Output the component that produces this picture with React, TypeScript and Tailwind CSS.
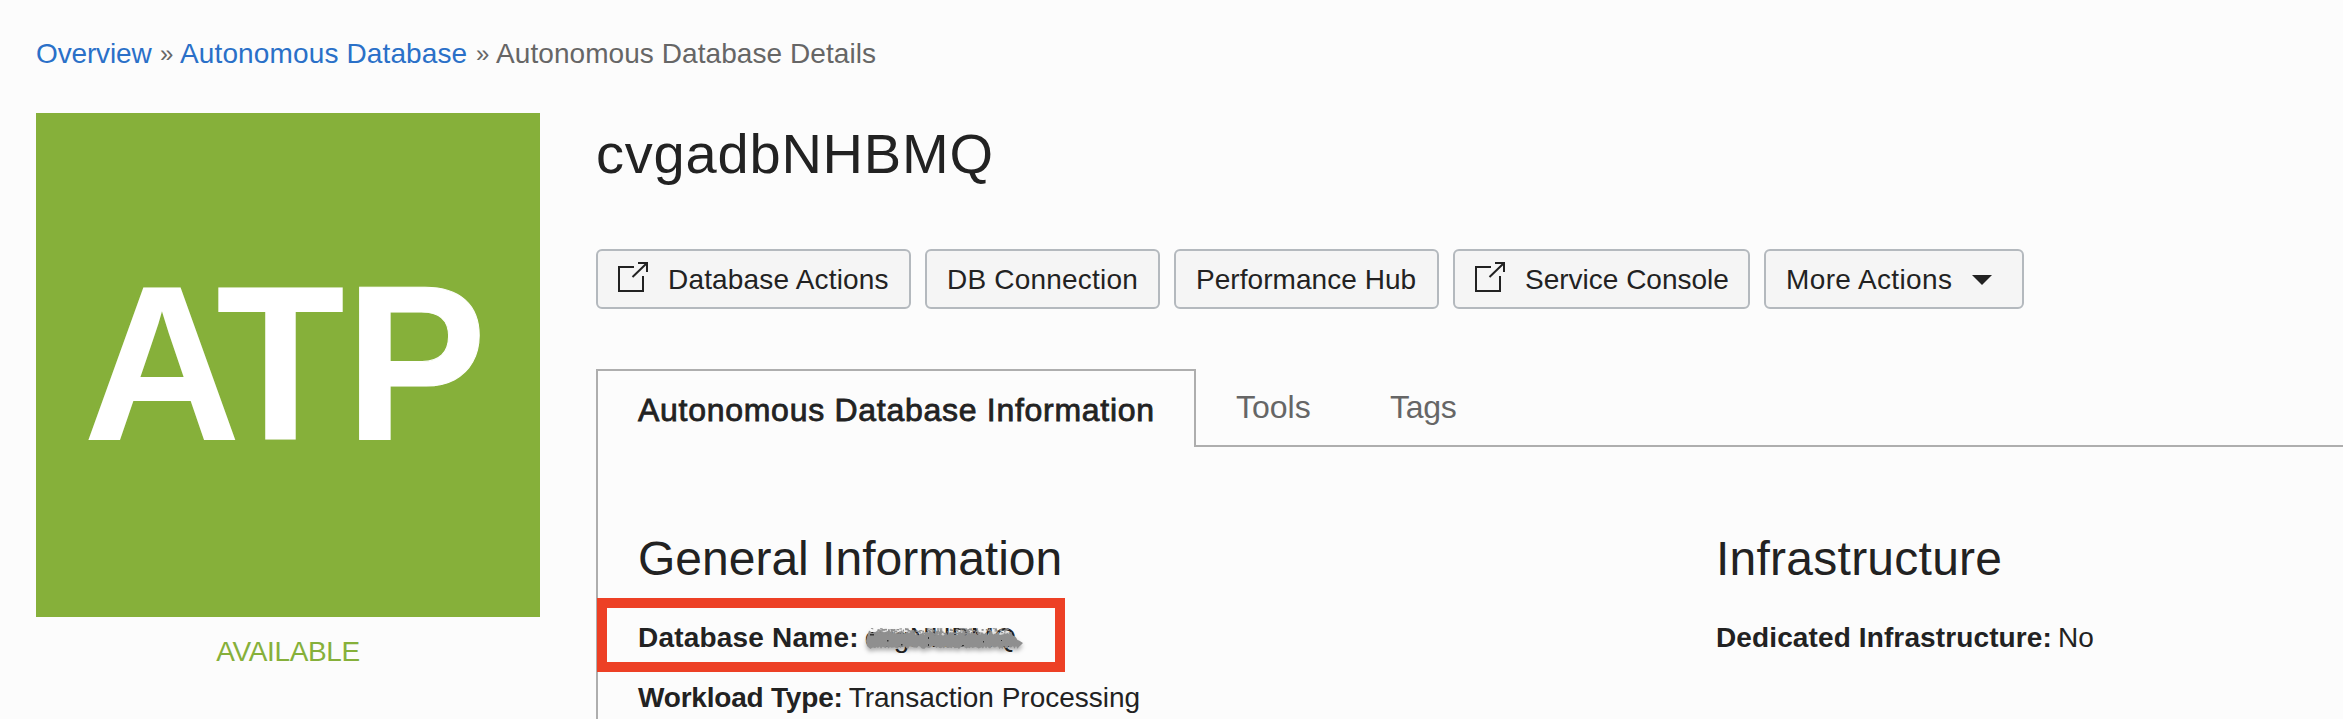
import type { ReactNode } from "react";

function ExternalIcon() {
  return (
    <svg width="30" height="30" viewBox="0 0 30 30" fill="none" stroke="#222" strokeWidth="2" className="-mt-[6px] mr-[20px] shrink-0">
      <path d="M16 5H1V29H25V14" />
      <path d="M14.5 15L28.5 1.5M20 1H29V10" />
    </svg>
  );
}

function ActionButton({ width, children }: { width: string; children: ReactNode }) {
  return (
    <button
      className={`flex h-[60px] shrink-0 items-center whitespace-nowrap rounded-[6px] border-2 border-[#b4b9be] bg-[#f5f5f5] pl-5 pt-[2px] text-[28px] leading-10 ${width}`}
    >
      {children}
    </button>
  );
}

function Field({ label, tracking, children }: { label: string; tracking: string; children: ReactNode }) {
  return (
    <div className="flex h-10 whitespace-nowrap text-[28px] leading-10">
      <span className={`font-bold ${tracking}`}>{label}</span>
      <span className="ml-[6px]">{children}</span>
    </div>
  );
}

let seed = 11;
function rand() {
  seed = (seed * 16807) % 2147483647;
  return seed / 2147483647;
}

const upper: string[] = [];
const lower: string[] = [];
for (let x = 4; x <= 154; x += 1.5) {
  const slope = x > 146 ? (x - 146) * 0.8 : x < 50 ? -1.5 : 0;
  upper.push(`${x},${(5 + slope + rand() * 3.5).toFixed(1)}`);
  lower.unshift(`${x},${(22 - rand() * 3).toFixed(1)}`);
}
const strokeShape = ["1,14", "2,10", ...upper, "158,16", "156,18", ...lower, "2,19"].join(" ");
const specks = Array.from({ length: 170 }, () => {
  const x = 5 + rand() * 140;
  const y = 1 + rand() * 6;
  return { x, y, w: 1 + rand() * 2.2, h: 0.8 + rand() * 1.4 };
});

function Scribble() {
  return (
    <svg width="160" height="28" viewBox="0 0 160 28" className="absolute left-0 top-[9px] drop-shadow-[0_3px_2px_rgba(0,0,0,0.3)]">
      <polygon points={strokeShape} fill="#8f8f8f" />
      {specks.map((s, i) => (
        <rect key={i} x={s.x} y={s.y} width={s.w} height={s.h} fill="#8f8f8f" />
      ))}
      <g fill="#333">
        <rect x="5" y="7" width="4" height="1.5" />
        <rect x="22" y="13" width="1.5" height="1.5" />
        <rect x="36" y="17" width="1.5" height="1.5" />
        <rect x="63" y="10" width="1" height="2" />
        <rect x="63" y="17" width="1" height="2" />
        <rect x="97" y="18" width="2" height="1" />
        <rect x="118" y="14" width="1" height="1.5" />
        <rect x="136" y="13" width="1" height="1" />
      </g>
    </svg>
  );
}

export default function App() {
  return (
    <div className="h-[719px] w-[2343px] overflow-hidden bg-[#fcfcfc] font-['Liberation_Sans',Arial,sans-serif] text-[#222]">
      <nav className="flex h-[113px] whitespace-nowrap pl-9 pt-[34px] text-[28px] leading-10 text-[#666]">
        <a className="w-[124px] tracking-[-0.15px] text-[#2a70c8]">Overview</a>
        <span className="w-5 text-[24px]">»</span>
        <a className="w-[296px] tracking-[0.13px] text-[#2a70c8]">Autonomous Database</a>
        <span className="w-5 text-[24px]">»</span>
        <span className="tracking-[0.07px]">Autonomous Database Details</span>
      </nav>

      <main className="flex pl-9">
        <aside className="w-[504px] shrink-0 text-center">
          <div className="h-[504px] bg-[#86b03a]">
            <svg width="504" height="504" viewBox="0 0 504 504" fill="#fff" fontSize="221" fontWeight="700" className="font-['Liberation_Sans',Arial,sans-serif]">
              <text x="47" y="326.5" textLength="158" lengthAdjust="spacingAndGlyphs">A</text>
              <text x="180" y="326.5" textLength="129" lengthAdjust="spacingAndGlyphs">T</text>
              <text x="309.5" y="326.5" textLength="141" lengthAdjust="spacingAndGlyphs" stroke="#fff" strokeWidth="1">P</text>
            </svg>
          </div>
          <div className="mt-[15px] text-[28px] leading-10 tracking-[-0.35px] text-[#86b03a]">AVAILABLE</div>
        </aside>

        <section className="ml-14 flex-1">
          <h1 className="h-[136px] pt-[9px] text-[56px] leading-[64px] tracking-[0.8px]">cvgadbNHBMQ</h1>

          <div className="flex gap-[14px]">
            <ActionButton width="w-[315px]"><ExternalIcon /><span className="tracking-[0.18px]">Database Actions</span></ActionButton>
            <ActionButton width="w-[235px] tracking-[0.2px]">DB Connection</ActionButton>
            <ActionButton width="w-[265px] tracking-[0.05px]">Performance Hub</ActionButton>
            <ActionButton width="w-[297px]"><ExternalIcon /><span>Service Console</span></ActionButton>
            <ActionButton width="w-[260px]">
              <span className="w-[186px] text-left tracking-[0.38px]">More Actions</span>
              <svg width="20" height="10" viewBox="0 0 20 10">
                <path d="M0 0H20L10 10Z" fill="#222" />
              </svg>
            </ActionButton>
          </div>

          <div className="mt-[60px] flex h-[78px] whitespace-nowrap text-[32px] leading-10">
            <div className="w-[600px] shrink-0 border-2 border-b-0 border-[#aeaeae] pl-10 pt-[19px] tracking-[0.72px] [-webkit-text-stroke:0.8px_#222]">
              Autonomous Database Information
            </div>
            <div className="flex flex-1 border-b-2 border-[#aeaeae] pl-10 pt-[18px] text-[#666]">
              <span className="w-[154px]">Tools</span>
              <span className="tracking-[-0.3px]">Tags</span>
            </div>
          </div>

          <div className="flex h-[272px] border-l-2 border-[#aeaeae] pl-10 pt-[84px]">
            <div className="w-[1078px] shrink-0">
              <h2 className="text-[48px] leading-[56px]">General Information</h2>
              <div className="relative mt-[31px] flex flex-col gap-5">
                <Field label="Database Name:" tracking="tracking-[0.2px]">
                  <span className="relative inline-block tracking-[0.5px]">
                    cvgNHBMQ
                    <Scribble />
                  </span>
                </Field>
                <Field label="Workload Type:" tracking="tracking-[-0.2px]">Transaction Processing</Field>
                <div className="absolute -left-[41px] -top-5 h-[74px] w-[468px] border-[10px] border-[#ed4025]" />
              </div>
            </div>
            <div className="whitespace-nowrap">
              <h2 className="text-[48px] leading-[56px] tracking-[0.25px]">Infrastructure</h2>
              <div className="mt-[31px]">
                <Field label="Dedicated Infrastructure:" tracking="tracking-[0.12px]">No</Field>
              </div>
            </div>
          </div>
        </section>
      </main>
    </div>
  );
}
